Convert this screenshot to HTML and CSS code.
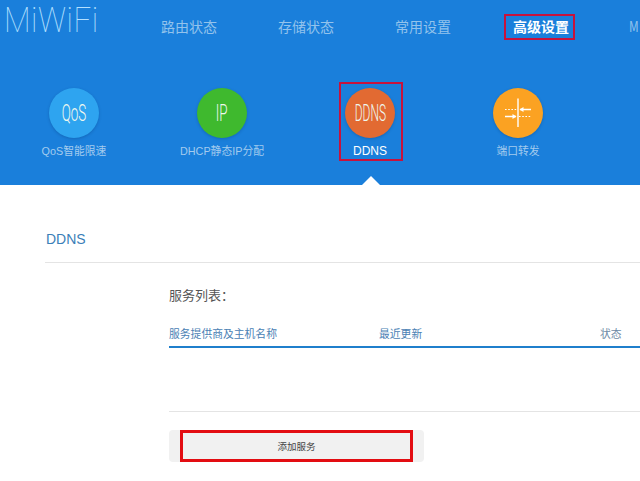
FILE: index.html
```html
<!DOCTYPE html>
<html lang="zh-CN">
<head>
<meta charset="utf-8">
<title>MiWiFi DDNS</title>
<link rel="stylesheet" href="styles.css">
</head>
<body>
<header class="top">
  <div class="bar">
    <div class="logo"><span class="logo-text">MiWiFi</span></div>
    <nav class="nav">
      <a class="nav-item">路由状态</a>
      <a class="nav-item">存储状态</a>
      <a class="nav-item">常用设置</a>
      <a class="nav-item nav-active">高级设置</a>
      <a class="nav-item nav-last">M</a>
    </nav>
  </div>
  <div class="tiles">
    <div class="tile">
      <div class="circle c-blue"><span class="glyph">QoS</span></div>
      <div class="tile-label">QoS智能限速</div>
    </div>
    <div class="tile">
      <div class="circle c-green"><span class="glyph">IP</span></div>
      <div class="tile-label">DHCP静态IP分配</div>
    </div>
    <div class="tile tile-active">
      <div class="circle c-orange"><span class="glyph glyph-wide">DDNS</span></div>
      <div class="tile-label">DDNS</div>
    </div>
    <div class="tile">
      <div class="circle c-amber">
        <svg class="port-icon" width="50" height="50" viewBox="0 0 50 50" aria-hidden="true">
          <path d="M25 10.5V39" stroke="#fff" stroke-width="1.4" fill="none"/>
          <path d="M12 21.5H24M26 28.5H38.5" stroke="#fff" stroke-width="1.2" stroke-dasharray="1.6 1.6" fill="none"/>
          <path d="M27 21.5H38M12 28.5H23" stroke="#fff" stroke-width="1.3" fill="none"/>
          <path d="M26.5 21.5l4-2.6v5.2zM23.5 28.5l-4-2.6v5.2z" fill="#fff"/>
        </svg>
      </div>
      <div class="tile-label">端口转发</div>
    </div>
  </div>
</header>
<main class="panel">
  <h1 class="title">DDNS</h1>
  <section class="body">
    <div class="list-label">服务列表：</div>
    <div class="thead">
      <div class="th th-name">服务提供商及主机名称</div>
      <div class="th th-time">最近更新</div>
      <div class="th th-state">状态</div>
    </div>
    <div class="tbody"></div>
    <button class="add" type="button">添加服务</button>
  </section>
</main>
</body>
</html>
```
FILE: styles.css
```css
*, *::before, *::after { box-sizing: border-box; }
html, body { margin: 0; padding: 0; height: 481px; overflow: hidden; background: #fff; }
body { font-family: "Liberation Sans", "Noto Sans CJK SC", sans-serif; width: 640px; }

.top { background: #1a7fdb; height: 185px; position: relative; }
.bar { display: flex; height: 82px; overflow: hidden; }
.logo {
  width: 161px;
  padding: 0 0 0 4px;
  font-family: "Roboto", sans-serif;
  font-weight: 100;
  font-size: 35px;
  line-height: 41px;
  color: #b4e0ff;
}
.logo-text { display: inline-block; transform: scaleX(0.885); transform-origin: left center; letter-spacing: 0.6px; }
.nav { display: flex; gap: 61px; height: 54px; flex: none; width: 479px; }
.nav-item {
  flex: none;
  font-size: 14px;
  line-height: 53px;
  color: #93c3ec;
  position: relative;
  font-family: "Noto Sans CJK SC", sans-serif;
}
.nav-last { transform: scaleX(0.85); transform-origin: left center; }
.nav-active { color: #fff; font-weight: 700; left: 1px; }
.nav-active::after {
  content: "";
  position: absolute;
  left: -9px;
  right: -6px;
  top: 14px;
  height: 26px;
  border: 2px solid #c8123c;
}

.tiles { display: flex; }
.tile { width: 148px; display: flex; flex-direction: column; align-items: center; padding-top: 6px; position: relative; }
.circle {
  width: 50px;
  height: 50px;
  border-radius: 50%;
  display: flex;
  align-items: center;
  justify-content: center;
  box-shadow: 0 1px 3px rgba(0, 40, 90, 0.25);
}
.c-blue { background: #2ea4f0; }
.c-green { background: #3fb92e; }
.c-orange { background: #e26a32; }
.c-amber { background: #fba222; }
.glyph {
  font-family: "Roboto", sans-serif;
  font-weight: 300;
  font-size: 24px;
  line-height: 28px;
  color: #eef7ee;
  transform: scaleX(0.56);
  white-space: nowrap;
}
.glyph-wide { transform: scaleX(0.5); }
.tile-label {
  margin-top: 5px;
  font-size: 10.8px;
  line-height: 16px;
  color: #a3cbee;
  white-space: nowrap;
}
.tile-active .tile-label { color: #fff; font-size: 12px; }
.tile-active::before {
  content: "";
  position: absolute;
  left: 43px;
  top: 0;
  width: 64px;
  height: 79px;
  border: 2px solid #c8123c;
}
.tile-active::after {
  content: "";
  position: absolute;
  left: 66px;
  top: 94px;
  border-left: 9px solid transparent;
  border-right: 9px solid transparent;
  border-bottom: 9px solid #fff;
}

.panel {
  background: #fff;
  width: 700px;
  height: 296px;
  border-radius: 8px 0 0 0;
  position: relative;
  padding-left: 45px;
}
.title {
  margin: 0;
  height: 78px;
  padding: 42px 0 0 1px;
  font-size: 14px;
  line-height: 24px;
  font-weight: 400;
  color: #3b7fb8;
  border-bottom: 1px solid #e4e4e4;
}
.body { padding: 21px 0 0 124px; }
.list-label { font-size: 13px; line-height: 22px; color: #555; font-family: "Noto Sans CJK SC", sans-serif; }
.thead {
  display: flex;
  margin-top: 17px;
  height: 25px;
  border-bottom: 2px solid #1f7fcc;
  font-size: 10.8px;
  line-height: 21px;
  color: #4a81b4;
  font-family: "Noto Sans CJK SC", sans-serif;
}
.th { flex: none; white-space: nowrap; }
.th-name { width: 210px; }
.th-time { width: 221px; }
.th-state { color: #6d8aa6; }
.tbody { height: 64px; border-bottom: 1px solid #e4e4e4; }
.add {
  display: block;
  margin-top: 18px;
  width: 255px;
  height: 32px;
  padding: 0 0 1px;
  border: 0;
  border-radius: 4px;
  background: #f1f1f1;
  color: #444;
  font-size: 9.5px;
  font-family: "Noto Sans CJK SC", sans-serif;
  position: relative;
}
.add::after {
  content: "";
  position: absolute;
  left: 11px;
  width: 233px;
  top: 0;
  bottom: 0;
  border: 3px solid #e30d12;
}
```
